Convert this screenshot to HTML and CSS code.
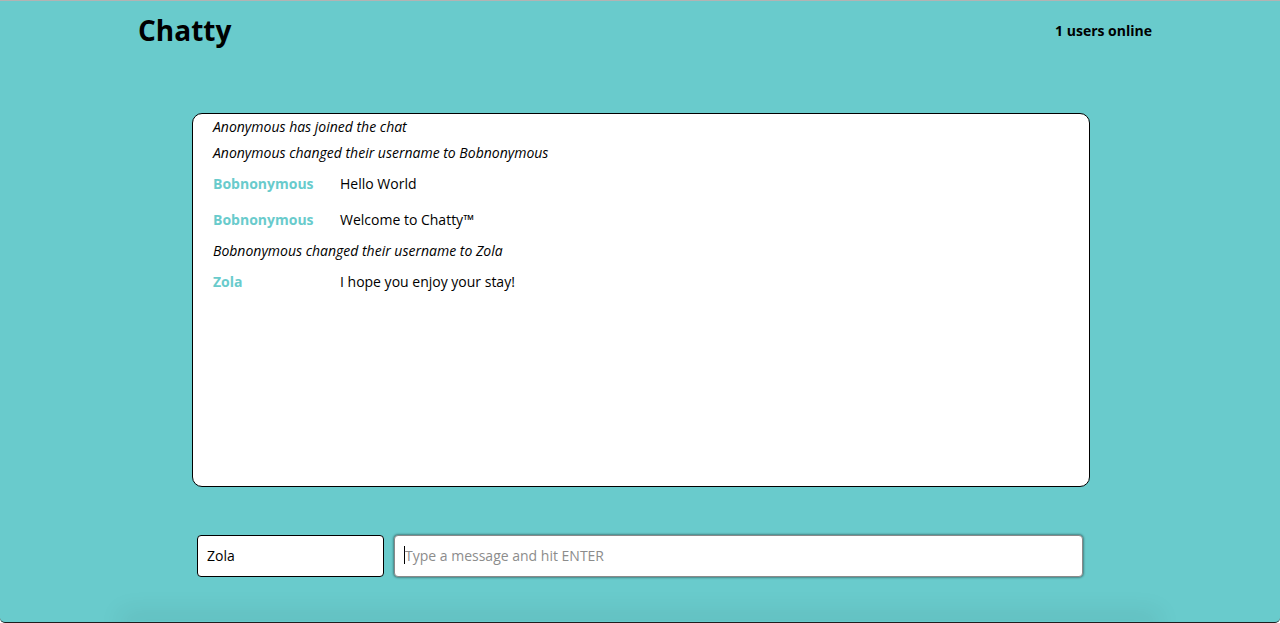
FILE: index.html
```html
<!DOCTYPE html>
<html lang="en">
<head>
<meta charset="utf-8">
<title>Chatty</title>
<link rel="stylesheet" href="styles.css">
</head>
<body>
<div class="page">
  <header class="navbar">
    <h1 class="brand">Chatty</h1>
    <span class="online">1 users online</span>
  </header>
  <main class="messages">
    <div class="notice">Anonymous has joined the chat</div>
    <div class="notice">Anonymous changed their username to Bobnonymous</div>
    <div class="message"><span class="username">Bobnonymous</span><span class="content">Hello World</span></div>
    <div class="message"><span class="username">Bobnonymous</span><span class="content">Welcome to Chatty™</span></div>
    <div class="notice">Bobnonymous changed their username to Zola</div>
    <div class="message"><span class="username">Zola</span><span class="content">I hope you enjoy your stay!</span></div>
  </main>
  <div class="chatbar">
    <input class="chatbar-username" type="text" value="Zola">
    <div class="chatbar-message"><span class="caret"></span><span class="placeholder">Type a message and hit ENTER</span></div>
  </div>
  <div class="footer-shadow"></div>
</div>
</body>
</html>
```

FILE: styles.css
```css
* { box-sizing: border-box; }
html, body { margin: 0; padding: 0; background: #ffffff; }
body {
  font-family: "Open Sans", "Noto Sans", sans-serif;
  color: #000;
}
.page {
  height: 623px;
  background: #69cbcc;
  border-top: 1px solid #b3b3b3;
  border-bottom: 1px solid #1e1e1e;
  border-radius: 0 0 5px 5px;
  overflow: hidden;
  display: flex;
  flex-direction: column;
}
.navbar {
  width: 1024px;
  margin: 0 auto;
  padding: 9px 0 0 10px;
  display: flex;
  justify-content: space-between;
  align-items: center;
  height: 50px;
}
.brand {
  margin: 0;
  font-size: 28px;
  font-weight: 700;
  line-height: 41px;
}
.online {
  font-size: 14px;
  font-weight: 700;
}
.messages {
  width: 898px;
  height: 374px;
  margin: 62px 0 0 calc(50% - 448px);
  background: #fff;
  border: 1px solid #000;
  border-radius: 10px;
  padding: 0 20px;
  font-size: 14px;
}
.notice {
  font-style: italic;
  line-height: 26px;
}
.message {
  display: flex;
  line-height: 36px;
}
.username {
  width: 127px;
  flex: none;
  font-weight: 700;
  color: #69cbcc;
}
.chatbar {
  width: 886px;
  margin: 48px auto 0;
  display: flex;
  gap: 10px;
}
.chatbar-username {
  width: 187px;
  height: 42px;
  border: 1px solid #000;
  border-radius: 4px;
  padding: 0 9px 2px;
  font-family: "Open Sans", "Noto Sans", sans-serif;
  font-size: 14px;
  color: #000;
  background: #fff;
  outline: none;
}
.chatbar-message {
  flex: 1;
  height: 42px;
  border: 1px solid #8a8a8a;
  border-radius: 4px;
  box-shadow: 0 0 2px 1px rgba(0,0,0,0.35);
  background: #fff;
  display: flex;
  align-items: center;
  padding: 0 0 2px 9px;
  font-size: 14px;
}
.caret {
  width: 1px;
  height: 18px;
  background: #000;
}
.placeholder {
  color: #8c8c8c;
}
.footer-shadow {
  margin: auto 130px 0;
  height: 1px;
  box-shadow: 0 0 24px 10px rgba(0,0,0,0.07);
}
```
